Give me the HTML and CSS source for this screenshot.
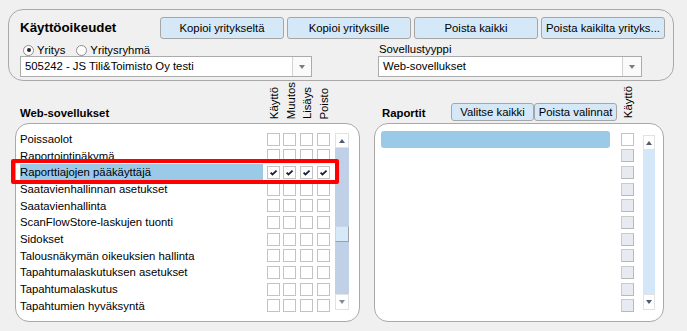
FILE: index.html
```html
<!DOCTYPE html>
<html lang="fi">
<head>
<meta charset="utf-8">
<title>Käyttöoikeudet</title>
<link rel="stylesheet" href="styles.css">
</head>
<body>
<div class="page">
  <section class="top-panel">
    <div class="top-row">
      <h1 class="title">Käyttöoikeudet</h1>
      <div class="top-buttons">
        <button class="btn btn-top">Kopioi yritykseltä</button>
        <button class="btn btn-top">Kopioi yrityksille</button>
        <button class="btn btn-top">Poista kaikki</button>
        <button class="btn btn-top">Poista kaikilta yrityks...</button>
      </div>
    </div>
    <div class="top-grid">
      <div class="radios">
        <span class="radio"><span class="radio-dot on"></span>Yritys</span>
        <span class="radio"><span class="radio-dot"></span>Yritysryhmä</span>
      </div>
      <div class="field-label">Sovellustyyppi</div>
      <div class="select select-company">
        <span class="select-value">505242 - JS Tili&amp;Toimisto Oy testi</span>
        <span class="select-btn"></span>
      </div>
      <div class="select select-type">
        <span class="select-value">Web-sovellukset</span>
        <span class="select-btn"></span>
      </div>
    </div>
  </section>

  <div class="main">
    <section class="col col-left">
      <div class="col-head">
        <div class="head-label">Web-sovellukset</div>
        <div class="vhead">Käyttö</div>
        <div class="vhead">Muutos</div>
        <div class="vhead">Lisäys</div>
        <div class="vhead">Poisto</div>
      </div>
      <div class="list-panel">
        <div class="rows">
          <div class="row"><span class="row-label">Poissaolot</span><span class="cb-cell"><span class="cb"></span></span><span class="cb-cell"><span class="cb"></span></span><span class="cb-cell"><span class="cb"></span></span><span class="cb-cell"><span class="cb"></span></span></div>
          <div class="row"><span class="row-label">Raportointinäkymä</span><span class="cb-cell"><span class="cb"></span></span><span class="cb-cell"><span class="cb"></span></span><span class="cb-cell"><span class="cb"></span></span><span class="cb-cell"><span class="cb"></span></span></div>
          <div class="row selected"><span class="row-label">Raporttiajojen pääkäyttäjä</span>
            <span class="cb-cell"><span class="cb"><svg class="check" viewBox="0 0 11 11" width="11" height="11"><path d="M2.6 5.6 L4.5 7.5 L8.6 3.6" fill="none" stroke="#1b2235" stroke-width="1.8"/></svg></span></span>
            <span class="cb-cell"><span class="cb"><svg class="check" viewBox="0 0 11 11" width="11" height="11"><path d="M2.6 5.6 L4.5 7.5 L8.6 3.6" fill="none" stroke="#1b2235" stroke-width="1.8"/></svg></span></span>
            <span class="cb-cell"><span class="cb"><svg class="check" viewBox="0 0 11 11" width="11" height="11"><path d="M2.6 5.6 L4.5 7.5 L8.6 3.6" fill="none" stroke="#1b2235" stroke-width="1.8"/></svg></span></span>
            <span class="cb-cell"><span class="cb"><svg class="check" viewBox="0 0 11 11" width="11" height="11"><path d="M2.6 5.6 L4.5 7.5 L8.6 3.6" fill="none" stroke="#1b2235" stroke-width="1.8"/></svg></span></span>
          </div>
          <div class="row"><span class="row-label">Saatavienhallinnan asetukset</span><span class="cb-cell"><span class="cb"></span></span><span class="cb-cell"><span class="cb"></span></span><span class="cb-cell"><span class="cb"></span></span><span class="cb-cell"><span class="cb"></span></span></div>
          <div class="row"><span class="row-label">Saatavienhallinta</span><span class="cb-cell"><span class="cb"></span></span><span class="cb-cell"><span class="cb"></span></span><span class="cb-cell"><span class="cb"></span></span><span class="cb-cell"><span class="cb"></span></span></div>
          <div class="row"><span class="row-label">ScanFlowStore-laskujen tuonti</span><span class="cb-cell"><span class="cb"></span></span><span class="cb-cell"><span class="cb"></span></span><span class="cb-cell"><span class="cb"></span></span><span class="cb-cell"><span class="cb"></span></span></div>
          <div class="row"><span class="row-label">Sidokset</span><span class="cb-cell"><span class="cb"></span></span><span class="cb-cell"><span class="cb"></span></span><span class="cb-cell"><span class="cb"></span></span><span class="cb-cell"><span class="cb"></span></span></div>
          <div class="row"><span class="row-label">Talousnäkymän oikeuksien hallinta</span><span class="cb-cell"><span class="cb"></span></span><span class="cb-cell"><span class="cb"></span></span><span class="cb-cell"><span class="cb"></span></span><span class="cb-cell"><span class="cb"></span></span></div>
          <div class="row"><span class="row-label">Tapahtumalaskutuksen asetukset</span><span class="cb-cell"><span class="cb"></span></span><span class="cb-cell"><span class="cb"></span></span><span class="cb-cell"><span class="cb"></span></span><span class="cb-cell"><span class="cb"></span></span></div>
          <div class="row"><span class="row-label">Tapahtumalaskutus</span><span class="cb-cell"><span class="cb"></span></span><span class="cb-cell"><span class="cb"></span></span><span class="cb-cell"><span class="cb"></span></span><span class="cb-cell"><span class="cb"></span></span></div>
          <div class="row"><span class="row-label">Tapahtumien hyväksyntä</span><span class="cb-cell"><span class="cb"></span></span><span class="cb-cell"><span class="cb"></span></span><span class="cb-cell"><span class="cb"></span></span><span class="cb-cell"><span class="cb"></span></span></div>
        </div>
        <div class="scroll scroll-left">
          <div class="sb-btn"><span class="arrow-up"></span></div>
          <div class="sb-track track-left"><div class="sb-thumb"></div></div>
          <div class="sb-btn"><span class="arrow-down light"></span></div>
        </div>
      </div>
    </section>

    <section class="col col-right">
      <div class="col-head">
        <div class="head-label">Raportit</div>
        <div class="head-buttons">
          <button class="btn btn-small">Valitse kaikki</button>
          <button class="btn btn-small">Poista valinnat</button>
        </div>
        <div class="vhead vhead-right">Käyttö</div>
      </div>
      <div class="list-panel">
        <div class="rows">
          <div class="row selected"><span class="row-label"></span><span class="cb-cell"><span class="cb"></span></span></div>
          <div class="row"><span class="row-label"></span><span class="cb-cell"><span class="cb disabled"></span></span></div>
          <div class="row"><span class="row-label"></span><span class="cb-cell"><span class="cb disabled"></span></span></div>
          <div class="row"><span class="row-label"></span><span class="cb-cell"><span class="cb disabled"></span></span></div>
          <div class="row"><span class="row-label"></span><span class="cb-cell"><span class="cb disabled"></span></span></div>
          <div class="row"><span class="row-label"></span><span class="cb-cell"><span class="cb disabled"></span></span></div>
          <div class="row"><span class="row-label"></span><span class="cb-cell"><span class="cb disabled"></span></span></div>
          <div class="row"><span class="row-label"></span><span class="cb-cell"><span class="cb disabled"></span></span></div>
          <div class="row"><span class="row-label"></span><span class="cb-cell"><span class="cb disabled"></span></span></div>
          <div class="row"><span class="row-label"></span><span class="cb-cell"><span class="cb disabled"></span></span></div>
          <div class="row"><span class="row-label"></span><span class="cb-cell"><span class="cb disabled"></span></span></div>
        </div>
        <div class="scroll scroll-right">
          <div class="sb-btn"><span class="arrow-up"></span></div>
          <div class="sb-track track-right"></div>
          <div class="sb-btn"><span class="arrow-down"></span></div>
        </div>
      </div>
    </section>
  </div>

  <div class="annotation"></div>
</div>
</body>
</html>
```

FILE: styles.css
```css
* { box-sizing: border-box; }
html, body { margin: 0; padding: 0; }
body {
  background: #f0f0f0;
  font-family: "Liberation Sans", Arial, sans-serif;
  font-size: 8.5pt;
  color: #000;
  width: 687px;
  height: 331px;
  overflow: hidden;
}
.page { position: relative; padding: 9px 0 0 8px; }

/* top panel */
.top-panel {
  width: 666px;
  height: 72px;
  border: 1px solid #a9a9a9;
  border-radius: 15px;
  padding: 7px 0 0 11px;
}
.top-row { display: flex; align-items: center; height: 22px; }
.title {
  margin: 0;
  width: 140px;
  font-size: 10pt;
  font-weight: bold;
  line-height: 22px;
}
.top-buttons { display: flex; gap: 3px; }
.btn {
  font: inherit;
  color: #000;
  background: #d5e8f7;
  border: 1px solid #a6a6a6;
  border-radius: 3px;
  padding: 0 2px;
  margin: 0;
  white-space: nowrap;
  overflow: hidden;
}
.btn-top { width: 124px; height: 22px; }

.top-grid {
  display: grid;
  grid-template-columns: 292px 66px 264px;
  grid-template-rows: 14px 21px;
  margin-top: 3px;
}
.radios { display: flex; align-items: center; padding-left: 3px; padding-top: 2px; grid-column: 1; grid-row: 1; }
.radio { display: flex; align-items: center; margin-right: 11px; }
.radio-dot {
  width: 11px;
  height: 11px;
  border: 1px solid #8e8e8e;
  border-radius: 50%;
  background: #fff;
  margin-right: 3px;
  display: flex;
  align-items: center;
  justify-content: center;
}
.radio-dot.on::after {
  content: "";
  width: 4px;
  height: 4px;
  border-radius: 50%;
  background: #262626;
}
.field-label { grid-column: 3; grid-row: 1; padding-left: 1px; line-height: 14px; }
.select {
  display: flex;
  height: 21px;
  border: 1px solid #ababab;
  background: #fff;
}
.select-company { grid-column: 1; grid-row: 2; }
.select-type { grid-column: 3; grid-row: 2; }
.select-value { flex: 1; padding-left: 4px; line-height: 19px; white-space: nowrap; }
.select-btn {
  width: 19px;
  border-left: 1px solid #d2d2d2;
  background: #fafafa;
  display: flex;
  align-items: center;
  justify-content: center;
}
.select-btn::after {
  content: "";
  border-left: 3.5px solid transparent;
  border-right: 3.5px solid transparent;
  border-top: 4px solid #7b7b7b;
}

/* lower section */
.main { display: flex; }
.col-left { margin-left: 7px; width: 345px; }
.col-right { margin-left: 14px; width: 290px; }
.col-head { height: 42px; display: flex; align-items: flex-end; }
.head-label { font-weight: bold; line-height: 13px; margin-bottom: 3px; }
.col-left .head-label { width: 248px; padding-left: 5px; }
.col-right .head-label { width: 77px; padding-left: 8px; }
.vhead {
  writing-mode: vertical-rl;
  transform: translateX(3px) rotate(180deg);
  width: 16.67px;
  line-height: 16.67px;
  margin-bottom: 4px;
  white-space: nowrap;
}
.vhead-right { margin-left: 0; margin-bottom: 5px; }
.head-buttons { display: flex; margin-bottom: 2px; }
.btn-small { width: 83px; height: 18px; }

.list-panel {
  height: 199px;
  border: 1px solid #a9a9a9;
  border-radius: 14px;
  background: #fff;
  display: flex;
  align-items: flex-start;
  padding-top: 7px;
}
.col-left .list-panel { padding-left: 4px; }
.col-right .list-panel { padding-left: 6px; }
.rows { display: flex; flex-direction: column; }
.row { display: flex; align-items: center; height: 16.67px; }
.row-label { height: 100%; line-height: 16.67px; white-space: nowrap; }
.col-left .row-label { width: 243px; }
.col-right .row-label { width: 229px; border-radius: 3px; }
.row.selected .row-label { background: #9bcae9; }
.cb-cell { display: flex; justify-content: flex-end; }
.col-left .cb-cell { width: 16.67px; }
.col-right .cb-cell { width: 24px; }
.cb {
  width: 13px;
  height: 13px;
  border: 1px solid #c3c3c3;
  background: #fff;
  display: flex;
  align-items: center;
  justify-content: center;
}
.cb.disabled {
  background: #e7eaf0;
  border-color: #cacaca #b8b8b8 #b8b8b8 #cacaca;
}
.check { display: block; }

/* scrollbars */
.scroll { display: flex; flex-direction: column; }
.scroll-left { margin-left: 5px; margin-top: 2px; width: 14px; }
.scroll-right { margin-left: 9px; margin-top: 4px; width: 12px; }
.sb-btn {
  height: 16px;
  background: #fff;
  border: 1px solid #e2e2e2;
  display: flex;
  align-items: center;
  justify-content: center;
}
.sb-btn:first-child { height: 15px; }
.sb-track { display: flex; flex-direction: column; }
.track-left { height: 146px; background: #bfd0e7; }
.track-right { height: 144px; background: #d3e7f8; }
.sb-thumb {
  margin-top: 78px;
  height: 16px;
  background: #d6e9f8;
  border: 1px solid #a0a0a0;
  border-top-color: #c8d6e6;
  border-left-color: #c8d6e6;
}
.arrow-up {
  width: 0; height: 0;
  border-left: 3.5px solid transparent;
  border-right: 3.5px solid transparent;
  border-bottom: 4px solid #4f5a74;
}
.arrow-down {
  width: 0; height: 0;
  border-left: 3.5px solid transparent;
  border-right: 3.5px solid transparent;
  border-top: 4px solid #4f5a74;
}
.arrow-down.light { border-top-color: #838a98; }

/* red annotation frame laid over the selected row */
.annotation {
  position: absolute;
  left: 11px;
  top: 159px;
  width: 328px;
  height: 25px;
  border: 4px solid #ff0000;
  border-radius: 2px;
  pointer-events: none;
}
```
